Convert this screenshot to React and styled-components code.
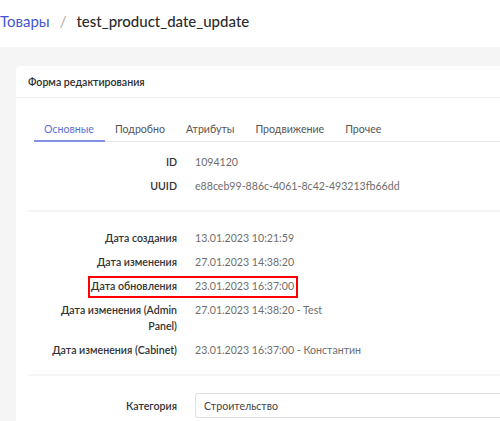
import React from "react";
import styled, { createGlobalStyle } from "styled-components";

const GlobalStyle = createGlobalStyle`
  body {
    margin: 0;
    background: #f5f5f5;
    font-family: "Lato", "Noto Sans", sans-serif;
    color: #333;
  }
`;

const Page = styled.div`
  width: 500px;
  height: 421px;
  overflow: hidden;
  background: #f5f5f5;
`;

const TopBar = styled.div`
  height: 47px;
  background: #fff;
  display: flex;
  align-items: center;
  gap: 10px;
  padding-bottom: 6px;
  box-sizing: border-box;
  font-size: 15px;
  white-space: nowrap;
`;

const Crumb = styled.a`
  color: #4356d4;
  text-decoration: none;
`;

const Slash = styled.span`
  color: #aaa;
`;

const Title = styled.span`
  color: #2b2b2b;
  font-weight: 500;
`;

const Card = styled.div`
  margin: 19px 0 0 16px;
  background: #fff;
  border-radius: 4px 0 0 0;
`;

const CardHeader = styled.div`
  height: 31px;
  display: flex;
  align-items: center;
  padding-left: 12px;
  font-size: 10.6px;
  font-weight: 600;
  color: #2e2e2e;
  border-bottom: 1px solid #f0f0f0;
`;

const Body = styled.div`
  padding: 20px 0 30px 12px;
`;

const TabBar = styled.div`
  display: flex;
  margin-left: 6px;
  border-bottom: 1px solid #e6e6e6;
`;

const Tab = styled.div`
  display: flex;
  align-items: center;
  padding: 0 11px 0 10px;
  height: 22px;
  font-size: 10.6px;
  color: ${(p) => (p.active ? "#5b70d8" : "#555")};
  border-bottom: 2px solid ${(p) => (p.active ? "#8192e4" : "transparent")};
  margin-bottom: -1px;
  white-space: nowrap;
`;

const Section = styled.div`
  display: flex;
  flex-direction: column;
  gap: 8px;
  padding: ${(p) => p.pad};
  border-bottom: ${(p) => (p.last ? "none" : "2px solid #f5f5f5")};
`;

const Row = styled.div`
  position: relative;
  display: grid;
  grid-template-columns: 149px 1fr;
  column-gap: 18px;
  align-items: ${(p) => (p.center ? "center" : "start")};
  font-size: 10.6px;
  line-height: 16px;

  ${(p) =>
    p.marked &&
    `
    &::before {
      content: "";
      position: absolute;
      left: 60px;
      top: -2px;
      width: 206px;
      height: 18px;
      border: 2px solid #f00;
    }
  `}
`;

const Label = styled.div`
  padding-left: 22px;
  text-align: right;
  font-weight: 600;
  color: #333;
`;

const Value = styled.div`
  color: #6e6e6e;
  white-space: nowrap;
`;

const Input = styled.div`
  height: 25px;
  box-sizing: border-box;
  border: 1px solid #e2e2e2;
  border-right: none;
  border-radius: 3px 0 0 3px;
  display: flex;
  align-items: center;
  padding-left: 8px;
  color: #444;
`;

const tabs = ["Основные", "Подробно", "Атрибуты", "Продвижение", "Прочее"];

const dates = [
  ["Дата создания", "13.01.2023 10:21:59"],
  ["Дата изменения", "27.01.2023 14:38:20"],
  ["Дата обновления", "23.01.2023 16:37:00", true],
  ["Дата изменения (Admin Panel)", "27.01.2023 14:38:20 - Test"],
  ["Дата изменения (Cabinet)", "23.01.2023 16:37:00 - Константин"],
];

export default function App() {
  return (
    <Page>
      <GlobalStyle />
      <TopBar>
        <Crumb href="#">Товары</Crumb>
        <Slash>/</Slash>
        <Title>test_product_date_update</Title>
      </TopBar>
      <Card>
        <CardHeader>Форма редактирования</CardHeader>
        <Body>
          <TabBar>
            {tabs.map((t, i) => (
              <Tab key={t} active={i === 0}>
                {t}
              </Tab>
            ))}
          </TabBar>
          <Section pad="12px 0 16px">
            <Row>
              <Label>ID</Label>
              <Value>1094120</Value>
            </Row>
            <Row>
              <Label>UUID</Label>
              <Value>e88ceb99-886c-4061-8c42-493213fb66dd</Value>
            </Row>
          </Section>
          <Section pad="18px 0 16px">
            {dates.map(([l, v, m]) => (
              <Row key={l} marked={m}>
                <Label>{l}</Label>
                <Value>{v}</Value>
              </Row>
            ))}
          </Section>
          <Section pad="17px 0 0" last>
            <Row center>
              <Label>Категория</Label>
              <Input>Строительство</Input>
            </Row>
          </Section>
        </Body>
      </Card>
    </Page>
  );
}
